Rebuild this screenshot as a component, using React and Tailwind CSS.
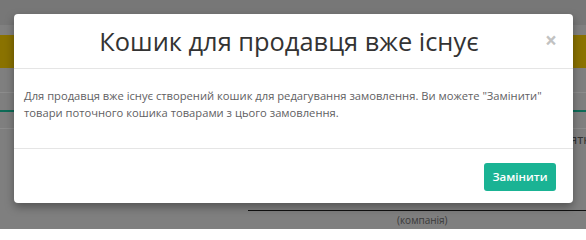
export default function App() {
  return (
    <div className="relative h-[229px] w-[586px] overflow-hidden bg-[#7f7f7f] font-['Open_Sans',sans-serif]">
      {/* dimmed page behind the modal */}
      <div className="flex h-full flex-col">
        <div className="h-[25px] bg-[#777777]" />
        <div className="h-[10px] bg-[#808080]" />
        <div className="h-[33px] bg-[#8a7200]" />
        <div className="h-[25px] border-b border-[#8c8c8c]" />
        <div className="h-[19px] border-b-2 border-[#0d6b57]" />
        <div className="h-[17px] border-b border-[#8c8c8c]" />
        <div className="flex h-[82px] flex-col">
          <div className="flex justify-end text-[13px] leading-[20px] text-[#333]">
            <span className="-mr-[4px]">ятк</span>
          </div>
          <div className="ml-[248px] mt-auto border-b border-[#111]" />
        </div>
        <div className="pl-[397px] pt-[2px] text-[10px] text-[#3a3a3a]">(компанія)</div>
      </div>

      {/* modal */}
      <div className="absolute left-[14px] top-[14px] w-[559px] rounded-[4px] bg-white shadow-[0_4px_10px_rgba(0,0,0,0.35)]">
        <div className="relative flex h-[55px] items-center justify-center border-b border-[#e5e5e5] pr-[9px]">
          <h4 className="pt-[1px] text-[25.4px] leading-none text-[#333]">Кошик для продавця вже існує</h4>
          <span className="absolute right-[16px] top-[16px] text-[21px] font-bold leading-none text-[#c2c2c2]">×</span>
        </div>
        <div className="h-[79px] px-[10px] pt-[18px] text-[11.2px] leading-[17px] text-[#5f6163]">
          Для продавця вже існує створений кошик для редагування замовлення. Ви можете "Замінити"
          товари поточного кошика товарами з цього замовлення.
        </div>
        <div className="flex h-[55px] justify-end border-t border-[#e5e5e5] pr-[17px] pt-[14px]">
          <button className="h-[28px] w-[72px] rounded-[3px] bg-[#1ab394] text-[11.5px] font-semibold text-white">
            Замінити
          </button>
        </div>
      </div>
    </div>
  );
}
